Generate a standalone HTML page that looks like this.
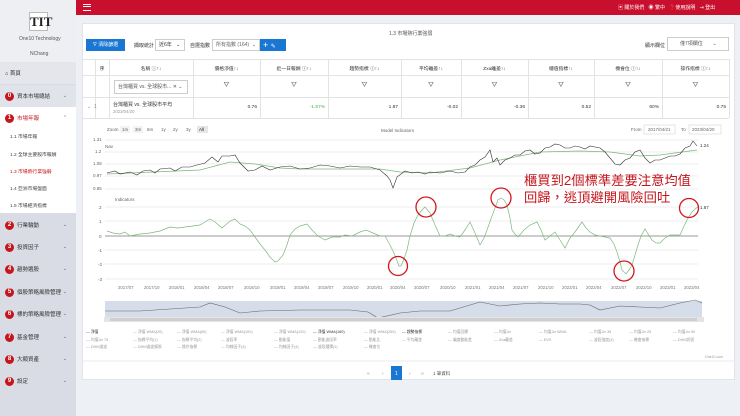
<!DOCTYPE html>
<html><head><meta charset="utf-8"><style>
*{margin:0;padding:0;box-sizing:border-box}
body{width:740px;height:416px;overflow:hidden;background:#edf0f4;font-family:"Liberation Sans","Noto Sans CJK TC",sans-serif;position:relative;color:#333}
.a{position:absolute}
.t{font-size:5px;white-space:nowrap}
.side{left:0;top:0;width:76px;height:416px;background:#d9dce5}
.menu{left:0;width:76px;height:22px;font-size:5.5px;display:flex;align-items:center;padding-left:5px;color:#333}
.num{width:9px;height:9px;border-radius:50%;background:#c4161c;color:#fff;font-size:6px;font-weight:bold;display:inline-flex;align-items:center;justify-content:center;margin-right:3px}
.chev{position:absolute;right:9px;font-size:5px;color:#666}
.sub{left:10px;font-size:4.8px;color:#444}
.col{position:absolute;border-left:1px solid #e3e3e3;height:59px;top:59px}
.h{font-size:4.8px;text-align:center;position:absolute;top:65px}
.f{position:absolute;top:82px;font-size:7px;color:#777;text-align:center}
.v{position:absolute;top:105px;font-size:4.8px;text-align:right}
</style></head><body>
<div class="a side"></div>
<div class="a" style="left:0;top:0;width:76px;height:62px;background:#eeeff2"></div>
<div class="a" style="left:29px;top:12px;width:19px;height:19px;border:1px solid #bbb;background:#fff;font:bold 13px 'Liberation Serif',serif;color:#222;text-align:center;line-height:17px">TIT</div>
<div class="a t" style="left:19px;top:36px;color:#555">One10 Technology</div>
<div class="a t" style="left:30px;top:51px;color:#555">NChang</div>
<div class="a" style="left:0;top:62px;width:76px;height:22px;background:#e4e6ec"></div>
<div class="a menu" style="top:62px">⌂ 首頁</div>
<div class="a menu" style="top:85px;background:#e1e3ea"><span class="num">0</span>資本市場總結<span class="chev">⌄</span></div>
<div class="a" style="left:0;top:107px;width:76px;height:106px;background:#fff"></div>
<div class="a menu" style="top:107px;color:#c4161c"><span class="num">1</span>市場年報<span class="chev">⌃</span></div>
<div class="a sub" style="top:133px">1.1 市場年報</div>
<div class="a sub" style="top:151px">1.2 全球主要股市報酬</div>
<div class="a sub" style="top:168px;color:#c4161c">1.3 市場熱行業強弱</div>
<div class="a sub" style="top:185px">1.4 亞洲市場盤面</div>
<div class="a sub" style="top:202px">1.5 市場經濟指標</div>
<div class="a menu" style="top:214px"><span class="num">2</span>行業輪動<span class="chev">⌄</span></div>
<div class="a menu" style="top:236px"><span class="num">3</span>投資因子<span class="chev">⌄</span></div>
<div class="a menu" style="top:258px"><span class="num">4</span>趨勢選股<span class="chev">⌄</span></div>
<div class="a menu" style="top:281px"><span class="num">5</span>個股策略風險管理<span class="chev">⌄</span></div>
<div class="a menu" style="top:303px"><span class="num">6</span>標的策略風險管理<span class="chev">⌄</span></div>
<div class="a menu" style="top:326px"><span class="num">7</span>基金管理<span class="chev">⌄</span></div>
<div class="a menu" style="top:348px"><span class="num">8</span>大類資產<span class="chev">⌄</span></div>
<div class="a menu" style="top:370px"><span class="num">9</span>設定<span class="chev">⌄</span></div>

<div class="a" style="left:76px;top:0;width:664px;height:15px;background:#c8102e"></div>
<div class="a" style="left:83px;top:4px;width:8px;height:7px;border-top:1.5px solid #fff;border-bottom:1.5px solid #fff"><div style="margin-top:1.3px;border-top:1.5px solid #fff"></div></div>
<div class="a t" style="left:618px;top:4px;color:#fff">▣ 關於我們 &nbsp; ◉ 繁中 &nbsp; ❓使用說明 &nbsp; ⇥ 登出</div>

<div class="a" style="left:82px;top:23px;width:653px;height:357px;background:#fff;border:1px solid #e2e4e8"></div>
<div class="a t" style="left:389px;top:30px;color:#555">1.3 市場熱行業強弱</div>
<div class="a t" style="left:86px;top:39px;width:39px;height:12px;background:#1976d2;color:#fff;line-height:12px;text-align:center">⛛ 清除篩選</div>
<div class="a t" style="left:134px;top:42px">擷取統計</div>
<div class="a t" style="left:155px;top:39px;width:30px;height:12px;border:1px solid #ccc;line-height:10px;padding-left:3px">近6年 &nbsp; ⌄</div>
<div class="a t" style="left:190px;top:42px">自選指數</div>
<div class="a t" style="left:212px;top:39px;width:48px;height:12px;border:1px solid #ccc;line-height:10px;padding-left:3px;color:#666">所有指數 (164) &nbsp;⌄</div>
<div class="a" style="left:260px;top:39px;width:26px;height:12px;background:#1976d2;color:#fff;font-size:9px;line-height:12px;padding-left:3px">+ <span style="font-size:6px">✎</span></div>
<div class="a t" style="left:645px;top:42px">顯示欄位</div>
<div class="a t" style="left:667px;top:37px;width:62px;height:14px;border:1px solid #ccc;line-height:12px;padding-left:12px;color:#555">僅7項欄位 &nbsp; &nbsp; &nbsp; ⌄</div>

<div class="a" style="left:82px;top:59px;width:647px;height:59px;border-top:1px solid #e3e3e3"></div>
<div class="a" style="left:82px;top:75px;width:647px;border-top:1px solid #e3e3e3"></div>
<div class="a" style="left:82px;top:97px;width:647px;border-top:1px solid #e3e3e3"></div>
<div class="a" style="left:82px;top:118px;width:647px;border-top:1px solid #e3e3e3"></div>
<div class="col" style="left:95px"></div><div class="col" style="left:109px"></div><div class="col" style="left:193px"></div><div class="col" style="left:260px"></div><div class="col" style="left:328px"></div><div class="col" style="left:401px"></div><div class="col" style="left:461px"></div><div class="col" style="left:528px"></div><div class="col" style="left:594px"></div><div class="col" style="left:662px"></div><div class="col" style="left:729px"></div>
<div class="h" style="left:95px;width:14px">序</div>
<div class="h" style="left:109px;width:84px">名稱 ⓘ↑↓</div>
<div class="h" style="left:193px;width:67px">價格淨值↑↓</div>
<div class="h" style="left:260px;width:68px">近一日報酬 ⓘ↑↓</div>
<div class="h" style="left:328px;width:73px">趨勢指標 ⓘ↑↓</div>
<div class="h" style="left:401px;width:60px">平均離差↑↓</div>
<div class="h" style="left:461px;width:67px">Zxa離差↑↓</div>
<div class="h" style="left:528px;width:66px">穩值指標↑↓</div>
<div class="h" style="left:594px;width:68px">機會位 ⓘ↑↓</div>
<div class="h" style="left:662px;width:67px">操作指標 ⓘ↑↓</div>
<div class="a t" style="left:114px;top:80px;width:74px;height:14px;border:1px solid #ccc;line-height:12px;padding-left:3px;color:#555">台灣櫃買 vs. 全球股市... ✕ ⌄</div>
<div class="f" style="left:193px;width:67px">⛛</div><div class="f" style="left:260px;width:68px">⛛</div><div class="f" style="left:328px;width:73px">⛛</div><div class="f" style="left:401px;width:60px">⛛</div><div class="f" style="left:461px;width:67px">⛛</div><div class="f" style="left:528px;width:66px">⛛</div><div class="f" style="left:594px;width:68px">⛛</div><div class="f" style="left:662px;width:67px">⛛</div>
<div class="a t" style="left:87px;top:104px;color:#888">⌄ &nbsp;1</div>
<div class="a t" style="left:113px;top:101px">台灣櫃買 vs. 全球股市平均</div>
<div class="a t" style="left:113px;top:109px;color:#999;font-size:4.3px">2023/04/20</div>
<div class="v" style="left:193px;width:64px">0.76</div><div class="v" style="left:260px;width:65px;color:#4caf50">-1.57%</div><div class="v" style="left:328px;width:70px">1.87</div><div class="v" style="left:401px;width:57px">-0.02</div><div class="v" style="left:461px;width:64px">-0.36</div><div class="v" style="left:528px;width:63px">0.52</div><div class="v" style="left:594px;width:65px">60%</div><div class="v" style="left:662px;width:64px">0.75</div>

<svg class="a" style="left:0;top:0" width="740" height="416" font-family="Liberation Sans,Noto Sans CJK TC,sans-serif">
<g font-size="4.5" fill="#666">
<text x="107" y="131">Zoom</text>
<rect x="120" y="126" width="10" height="7" fill="#f3f3f3"/><text x="122" y="131">1m</text>
<rect x="133" y="126" width="10" height="7" fill="#f3f3f3"/><text x="135" y="131">3m</text>
<text x="147" y="131">6m</text><text x="161" y="131">1y</text><text x="173" y="131">2y</text><text x="186" y="131">3y</text>
<rect x="197" y="126" width="11" height="7" fill="#e6e6e6"/><text x="199" y="131" fill="#222">All</text>
<text x="381" y="132">Model Indicators</text>
<text x="631" y="131">From</text><rect x="644" y="125" width="31" height="9" fill="#fff" stroke="#ccc" stroke-width=".5"/><text x="648" y="131">2017/04/21</text>
<text x="681" y="131">To</text><rect x="689" y="125" width="32" height="9" fill="#fff" stroke="#ccc" stroke-width=".5"/><text x="692" y="131">2023/04/20</text>
<text x="93" y="141">1.31</text><text x="95" y="153">1.2</text><text x="93" y="165">1.08</text><text x="93" y="177">0.97</text><text x="93" y="190">0.85</text>
<text x="105" y="148">Nav</text><text x="115" y="201">Indicators</text>
<text x="99" y="209">2</text><text x="99" y="223">1</text><text x="99" y="238">0</text><text x="98" y="252">-1</text><text x="98" y="266">-2</text><text x="98" y="281">-3</text>
<text x="700" y="147" fill="#333">1.24</text><text x="700" y="209" fill="#333">1.87</text>
</g>
<g stroke="#e6e6e6" stroke-width=".7">
<line x1="105" y1="140" x2="698" y2="140"/><line x1="105" y1="152" x2="698" y2="152"/><line x1="105" y1="164" x2="698" y2="164"/><line x1="105" y1="176" x2="698" y2="176"/><line x1="105" y1="189" x2="698" y2="189"/>
<line x1="105" y1="207" x2="698" y2="207"/><line x1="105" y1="221" x2="698" y2="221"/><line x1="105" y1="250" x2="698" y2="250"/><line x1="105" y1="264" x2="698" y2="264"/><line x1="105" y1="279" x2="698" y2="279"/>
</g>
<line x1="105" y1="236" x2="698" y2="236" stroke="#777" stroke-width=".7"/>
<polyline fill="none" stroke="#7cb87a" stroke-width=".7" points="107,174 200,170 230,162 255,164 280,168 300,169 380,169 400,172 430,173 470,168 500,160 540,152 580,151 610,152 640,156 660,155 697,150"/>
<polyline fill="none" stroke="#333" stroke-width=".6" points="107,173 115,171 120,174 130,172 137,175 143,171 150,170 155,173 160,169 170,168 175,171 182,167 190,167 197,165 205,163 212,157 218,162 222,156 230,156 235,155 240,163 248,171 255,170 262,166 270,170 280,167 290,166 300,169 310,168 320,165 330,166 340,168 350,166 360,167 370,167 380,170 387,176 390,180 393,188 397,177 405,171 412,173 418,172 425,174 430,172 440,173 450,171 458,173 465,172 470,167 475,165 480,160 485,157 490,150 493,162 497,158 500,165 505,160 510,158 515,155 520,155 525,151 530,150 535,154 540,153 545,148 550,147 555,144 560,145 565,148 570,148 575,146 580,147 585,149 590,146 600,148 605,152 610,158 615,164 620,165 625,160 630,158 635,152 640,150 645,158 650,163 655,160 660,160 665,158 670,156 675,156 680,154 685,148 690,146 693,141 697,146"/>
<polyline fill="none" stroke="#7cb87a" stroke-width=".7" points="107,231 113,233 120,234 125,232 130,236 140,234 150,233 160,231 170,227 178,228 185,227 193,226 200,225 205,222 210,219 215,222 222,228 230,221 235,219 240,224 245,226 250,230 255,237 260,244 265,250 270,257 275,262 278,261 283,255 287,245 290,235 295,229 300,226 307,224 312,230 318,236 325,240 332,237 340,237 345,235 352,236 360,232 366,230 373,233 380,236 385,236 390,245 393,251 396,258 399,266 401,266 404,259 407,250 410,236 414,223 418,215 422,210 425,207 430,213 435,225 440,236 445,236 450,234 455,236 460,237 465,230 470,222 475,233 480,245 484,238 487,230 492,216 495,208 498,200 501,198 504,200 507,205 510,218 512,230 515,234 518,237 524,230 530,225 537,222 541,230 545,240 550,236 555,232 560,240 565,248 570,238 575,232 582,222 586,228 590,232 595,235 600,236 605,237 610,238 614,244 617,252 620,262 622,270 624,272 626,274 629,270 632,265 635,255 638,245 641,236 645,229 648,234 652,240 656,243 660,243 665,238 670,235 675,235 680,235 684,226 688,218 692,212 695,209 698,207"/>
<g fill="none" stroke="#d2151c" stroke-width="1.3">
<circle cx="398" cy="266" r="9.5"/><circle cx="426" cy="207" r="10"/><circle cx="501" cy="198" r="10"/><circle cx="624" cy="271" r="10"/><circle cx="689" cy="208" r="9.5"/>
</g>
<text x="524" y="185" font-size="13.3" fill="#c4161c">櫃買到2個標準差要注意均值</text>
<text x="524" y="202" font-size="13.3" fill="#c4161c">回歸，逃頂避開風險回吐</text>
<g font-size="4.3" fill="#777">
<text x="118" y="289">2017/07</text><text x="144" y="289">2017/10</text><text x="169" y="289">2018/01</text><text x="194" y="289">2018/04</text><text x="218" y="289">2018/07</text><text x="244" y="289">2018/10</text><text x="270" y="289">2019/01</text><text x="294" y="289">2019/04</text><text x="318" y="289">2019/07</text><text x="343" y="289">2019/10</text><text x="367" y="289">2020/01</text><text x="390" y="289">2020/04</text><text x="414" y="289">2020/07</text><text x="440" y="289">2020/10</text><text x="465" y="289">2021/01</text><text x="489" y="289">2021/04</text><text x="513" y="289">2021/07</text><text x="538" y="289">2021/10</text><text x="562" y="289">2022/01</text><text x="586" y="289">2022/04</text><text x="611" y="289">2022/07</text><text x="636" y="289">2022/10</text><text x="660" y="289">2023/01</text><text x="684" y="289">2023/04</text>
</g>
<rect x="105" y="301" width="597" height="20" fill="#d5dcea"/>
<polyline fill="none" stroke="#666" stroke-width=".6" points="105,311 140,311 170,309 200,307 210,303 225,307 240,313 260,311 300,310 330,310 350,310 368,312 378,318 400,313 420,311 450,311 470,305 480,302 500,306 520,304 540,303 560,304 580,304 590,305 600,310 620,306 640,307 660,308 680,303 695,300 702,303"/>
<rect x="104" y="317" width="600" height="5" fill="#e4e4e4"/><rect x="110" y="318" width="587" height="3" fill="#cfcfcf"/>
<g font-size="3.8" fill="#999">
<text x="86" y="333" fill="#333">— 淨值</text><text x="133" y="333">— 淨值 WMA(20)</text><text x="177" y="333">— 淨值 WMA(60)</text><text x="221" y="333">— 淨值 WMA(100)</text><text x="274" y="333">— 淨值 WMA(120)</text><text x="313" y="333" fill="#333">— 淨值 WMA(160)</text><text x="364" y="333">— 淨值 WMA(250)</text><text x="402" y="333" fill="#333">— 趨勢指標</text><text x="448" y="333">— 均值回歸</text><text x="494" y="333">— 均值2σ</text><text x="539" y="333">— 均值2σ WMA</text><text x="589" y="333">— 均值2σ 35</text><text x="629" y="333">— 均值2σ 25</text><text x="673" y="333">— 均值2σ 50</text>
<text x="86" y="341">— 均值2σ 75</text><text x="133" y="341">— 指標平均(1)</text><text x="177" y="341">— 指標平均(2)</text><text x="221" y="341">— 波段率</text><text x="274" y="341">— 動能值</text><text x="313" y="341">— 動能波段率</text><text x="364" y="341">— 動能比</text><text x="402" y="341">— 平均離差</text><text x="448" y="341">— 偏度動能差</text><text x="494" y="341">— Zxa離差</text><text x="539" y="341">— EVS</text><text x="589" y="341">— 波段強度(4)</text><text x="629" y="341">— 機會指標</text><text x="673" y="341">— DHM訊號</text>
<text x="86" y="348">— DHM濾波</text><text x="133" y="348">— DHM濾波擴張</text><text x="177" y="348">— 操作指標</text><text x="221" y="348">— 均線因子(3)</text><text x="274" y="348">— 均線因子(4)</text><text x="313" y="348">— 波段選擇(1)</text><text x="364" y="348">— 機會位</text>
<text x="705" y="358" font-size="3.5">One10.com</text>
</g>
<line x1="82" y1="361" x2="735" y2="361" stroke="#e2e4e8" stroke-width=".7"/>
<g font-size="5" fill="#999"><text x="367" y="375">«</text><text x="382" y="375">‹</text><text x="409" y="375">›</text><text x="421" y="375">»</text><text x="433" y="375" fill="#555" font-size="4.5">1 筆資料</text></g>
<rect x="391" y="366" width="11" height="14" fill="#1976d2"/><text x="395" y="375" font-size="5" fill="#fff">1</text>
</svg>
</body></html>
